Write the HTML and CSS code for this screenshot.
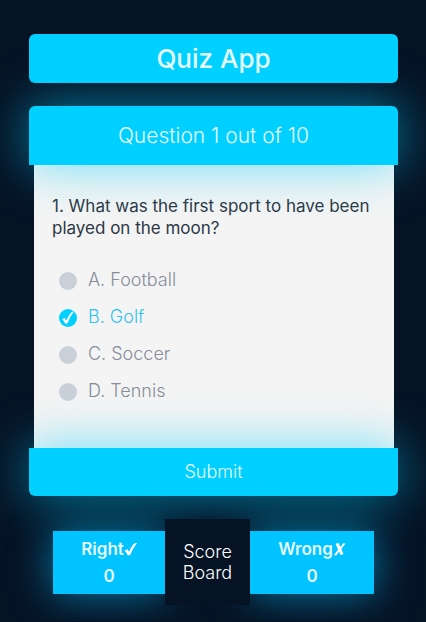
FILE: index.html
```html
<!DOCTYPE html>
<html lang="en">
<head>
  <meta charset="utf-8">
  <meta name="viewport" content="width=device-width, initial-scale=1">
  <title>Quiz App</title>
  <link rel="stylesheet" href="styles.css">
</head>
<body>
  <main class="app">
    <h1 class="title">Quiz App</h1>
    <form class="quiz">
      <h2 class="progress">Question 1 out of 10</h2>
      <fieldset class="question">
        <legend class="prompt">1. What was the first sport to have been played on the moon?</legend>
        <div class="options">
          <label class="option"><input class="radio" type="radio" name="answer" value="a"><span class="mark"></span>A. Football</label>
          <label class="option"><input class="radio" type="radio" name="answer" value="b" checked><span class="mark"><svg class="tick" viewBox="0 0 18 18" aria-hidden="true"><path d="M3.2 10.2 5.6 9.1 7.4 11.6C8.8 8 10.6 5 13.2 2.6L14.6 3C12 6.500 10.100 10 8.600 14.200L6.300 14.700C5.500 13 4.500 11.400 3.200 10.200Z"/></svg></span>B. Golf</label>
          <label class="option"><input class="radio" type="radio" name="answer" value="c"><span class="mark"></span>C. Soccer</label>
          <label class="option"><input class="radio" type="radio" name="answer" value="d"><span class="mark"></span>D. Tennis</label>
        </div>
      </fieldset>
      <button class="submit" type="button">Submit</button>
    </form>
    <section class="scores">
      <div class="score">
        <span class="score-name">Right<svg class="sign" viewBox="0 0 13 14" aria-hidden="true"><path d="M0.500 8.500 3.300 7.300 5.200 9.800C6.600 6 8.600 2.800 11 1H13C10.300 4.300 8 8.500 6.500 12.800L3.800 13.500C3 11.600 1.900 9.900 0.500 8.500Z"/></svg></span>
        <span>0</span>
      </div>
      <h3 class="board">Score Board</h3>
      <div class="score">
        <span class="score-name">Wrong<svg class="sign" viewBox="0 0 13 14" aria-hidden="true"><path d="M2.500 1.800 5.700 1 7.300 5 10.300 1.200 12.500 1.600 8.300 7 10.500 12 7.600 13.200 6.100 9.400 3.200 13.500 0.800 13.300 5.100 7.500Z"/></svg></span>
        <span>0</span>
      </div>
    </section>
  </main>
</body>
</html>
```

FILE: styles.css
```css
* {
  box-sizing: border-box;
}

body {
  margin: 0;
  min-height: 100vh;
  background: #061325;
  color: #e4faff;
  font-family: Inter, "Open Sans", sans-serif;
  font-size: 17px;
  line-height: 22px;
}

.app {
  padding: 34px 28px 16px 29px;
  overflow: hidden;
}

h1, h2, h3 {
  margin: 0;
}

.title {
  position: relative;
  z-index: 1;
  margin-bottom: 23px;
  padding: 8px;
  border-radius: 6px;
  background: #00d0ff;
  font-size: 26px;
  font-weight: 500;
  line-height: 33px;
  text-align: center;
}

.progress {
  position: relative;
  padding: 16px;
  border-radius: 6px 6px 0 0;
  background: #00d0ff;
  box-shadow: 0 0 50px rgba(0, 208, 255, 0.6);
  font-size: 21px;
  font-weight: 300;
  line-height: 27px;
  text-align: center;
}

.question {
  min-width: 0;
  margin: 0 4px 0 5px;
  padding: 30px 16px 39px 18px;
  border: 0;
  background: #f4f4f4;
}

.prompt {
  float: left;
  width: 100%;
  margin-bottom: 22px;
  padding: 0;
  color: #2c3845;
}

.options {
  clear: both;
  padding: 0 7px;
}

.option {
  display: flex;
  align-items: center;
  gap: 11px;
  height: 37px;
  color: #858e99;
  font-size: 18px;
  font-weight: 300;
}

.radio {
  position: absolute;
  opacity: 0;
}

.mark {
  width: 18px;
  height: 18px;
  margin-top: 3px;
  border-radius: 50%;
  background: #c9d0d8;
}

.tick {
  display: block;
  fill: #fff;
}

.option:has(:checked) {
  color: #35c2ee;
}

.radio:checked + .mark {
  background: #00d0ff;
}

.submit {
  position: relative;
  display: block;
  width: 100%;
  height: 48px;
  border: 0;
  border-radius: 0 0 6px 6px;
  background: #00d0ff;
  box-shadow: 0 0 50px rgba(0, 208, 255, 0.6);
  color: inherit;
  font: inherit;
  font-size: 18px;
  font-weight: 300;
}

.scores {
  display: grid;
  grid-template-columns: 112fr 85fr 124fr;
  align-items: center;
  margin: 23px 24px 0;
}

.score {
  position: relative;
  display: flex;
  flex-direction: column;
  align-items: center;
  padding: 5px 0 4px;
  background: #00c3ff;
  box-shadow: 0 0 40px rgba(0, 195, 255, 0.6);
  font-weight: 600;
  line-height: 27px;
}

.score-name {
  display: flex;
  align-items: center;
}

.sign {
  width: 13px;
  height: 14px;
  fill: #fff;
}

.board {
  position: relative;
  z-index: 1;
  padding: 22px 16px;
  background: #061325;
  color: #fff;
  font-size: 18px;
  font-weight: 300;
  line-height: 21px;
  text-align: center;
}
```
